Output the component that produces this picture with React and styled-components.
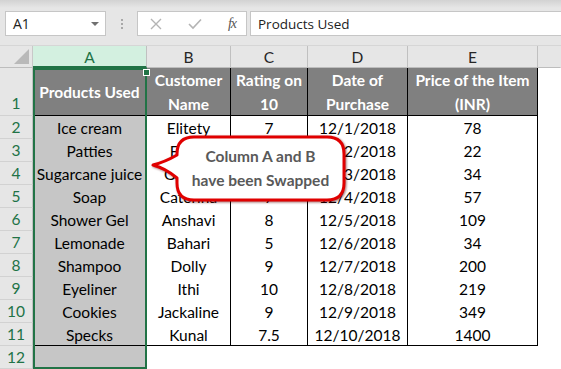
import React from 'react';
import styled, { createGlobalStyle } from 'styled-components';

const GlobalStyle = createGlobalStyle`
  html, body {
    margin: 0;
    padding: 0;
    overflow: hidden;
    background: #fff;
  }
  * {
    box-sizing: border-box;
  }
`;

const Page = styled.div`
  width: 561px;
  height: 369px;
  overflow: hidden;
  font-family: Lato, 'Liberation Sans', sans-serif;
`;

const Toolbar = styled.div`
  height: 46px;
  display: flex;
  align-items: flex-start;
  padding: 11px 0 0 5px;
  background: linear-gradient(#d2d2d2 0px, #e6e6e6 8px, #e6e6e6 100%);
  border-bottom: 1px solid #d6d6d6;
`;

const NameBox = styled.div`
  width: 101px;
  height: 25px;
  background: #fff;
  border: 1px solid #c6c6c6;
  display: flex;
  align-items: center;
  justify-content: space-between;
  padding: 0 6px 0 7px;
  font-family: 'Open Sans', sans-serif;
  font-size: 14px;
  color: #222;
`;

const DropArrow = styled.span`
  width: 0;
  height: 0;
  border-left: 4px solid transparent;
  border-right: 4px solid transparent;
  border-top: 4px solid #707070;
`;

const Grip = styled.div`
  width: 31px;
  height: 25px;
  display: flex;
  flex-direction: column;
  align-items: center;
  justify-content: center;
  gap: 2px;

  span {
    width: 2px;
    height: 2px;
    background: #a8a8a8;
  }
`;

const ButtonBox = styled.div`
  width: 110px;
  height: 25px;
  background: #fff;
  border: 1px solid #c6c6c6;
  display: flex;
  align-items: center;
  justify-content: space-between;
  padding: 0 10px 0 12px;
`;

const Fx = styled.span`
  font-family: 'Liberation Serif', serif;
  font-style: italic;
  font-size: 14px;
  color: #555;
  letter-spacing: -1px;
`;

const FormulaInput = styled.div`
  flex: 1;
  height: 25px;
  margin-left: 3px;
  background: #fff;
  border: 1px solid #c6c6c6;
  border-right: none;
  display: flex;
  align-items: center;
  padding-left: 7px;
  font-family: 'Open Sans', sans-serif;
  font-size: 13.5px;
  color: #222;
`;

const Sheet = styled.div`
  position: relative;
  display: grid;
  grid-template-columns: 33px 114px 84px 77px 100px 130px 1fr;
  grid-template-rows: 22px 48px repeat(11, 23px);
`;

const Corner = styled.div`
  background: #e6e6e6;
  border-right: 1px solid #c8c8c8;
  border-bottom: 1px solid #bdbdbd;
  position: relative;

  &::after {
    content: '';
    position: absolute;
    right: 3px;
    bottom: 3px;
    width: 0;
    height: 0;
    border-left: 15px solid transparent;
    border-bottom: 15px solid #b9b9b9;
  }
`;

const ColHead = styled.div`
  background: ${p => (p.$active ? '#d3f0e0' : '#e6e6e6')};
  color: ${p => (p.$active ? '#217346' : '#262626')};
  border-right: 1px solid ${p => (p.$last ? 'transparent' : '#c0c0c0')};
  border-bottom: ${p => (p.$active ? '2px solid #217346' : '1px solid #bdbdbd')};
  display: flex;
  align-items: center;
  justify-content: center;
  font-size: 15.5px;
  padding-top: 1px;
`;

const RowHead = styled.div`
  background: #e6e6e6;
  color: #217346;
  border-right: 1px solid #c0c0c0;
  border-bottom: 1px solid #d2d2d2;
  display: flex;
  align-items: ${p => (p.$tall ? 'flex-end' : 'center')};
  justify-content: center;
  padding-bottom: ${p => (p.$tall ? '3px' : '0')};
  font-size: 15.5px;
`;

const bgFor = v => (v === 'head' ? '#808080' : v === 'sel' ? '#c6c6c6' : '#fff');

const Cell = styled.div`
  background: ${p => bgFor(p.$variant)};
  color: ${p => (p.$variant === 'head' ? '#fff' : '#000')};
  font-weight: ${p => (p.$variant === 'head' ? 700 : 400)};
  border-right: ${p => (p.$edge ? '1px solid #000' : 'none')};
  border-bottom: ${p => (p.$bottom ? '1px solid #000' : 'none')};
  display: flex;
  align-items: center;
  justify-content: center;
  text-align: center;
  font-size: 15.5px;
  line-height: 24px;
  white-space: nowrap;
  padding-top: ${p => (p.$variant === 'head' ? '1px' : '1px')};
`;

const Selection = styled.div`
  position: absolute;
  left: 33px;
  top: 22px;
  width: 114px;
  bottom: 0;
  border: 2px solid #217346;
  pointer-events: none;
`;

const Handle = styled.div`
  position: absolute;
  right: -5px;
  top: -1px;
  width: 7px;
  height: 7px;
  background: #217346;
  border: 1px solid #fff;
`;

const Callout = styled.div`
  position: absolute;
  left: 150px;
  top: 87px;
  width: 198px;
  height: 72px;

  svg {
    position: absolute;
    inset: 0;
    filter: drop-shadow(1px 1px 1px rgba(90, 0, 0, 0.55));
  }
`;

const CalloutText = styled.div`
  position: absolute;
  left: 27px;
  top: 3px;
  width: 167px;
  height: 64px;
  display: flex;
  flex-direction: column;
  align-items: center;
  justify-content: center;
  font-weight: 700;
  font-size: 15.5px;
  line-height: 24px;
  color: #595959;
`;

const headers = ['Products Used', 'Customer\nName', 'Rating on\n10', 'Date of\nPurchase', 'Price of the Item\n(INR)'];

const rows = [
  ['Ice cream', 'Elitety', '7', '12/1/2018', '78'],
  ['Patties', 'Fiona', '8', '12/2/2018', '22'],
  ['Sugarcane juice', 'Gayatri', '6', '12/3/2018', '34'],
  ['Soap', 'Caterina', '7', '12/4/2018', '57'],
  ['Shower Gel', 'Anshavi', '8', '12/5/2018', '109'],
  ['Lemonade', 'Bahari', '5', '12/6/2018', '34'],
  ['Shampoo', 'Dolly', '9', '12/7/2018', '200'],
  ['Eyeliner', 'Ithi', '10', '12/8/2018', '219'],
  ['Cookies', 'Jackaline', '9', '12/9/2018', '349'],
  ['Specks', 'Kunal', '7.5', '12/10/2018', '1400'],
];

const letters = ['A', 'B', 'C', 'D', 'E', ''];

const CrossIcon = () => (
  <svg width="12" height="12" viewBox="0 0 12 12">
    <path d="M1 1 L11 11 M11 1 L1 11" stroke="#b4b4b4" strokeWidth="1.4" fill="none" />
  </svg>
);

const CheckIcon = () => (
  <svg width="14" height="12" viewBox="0 0 14 12">
    <path d="M1 6 L5 10 L13 1.5" stroke="#b4b4b4" strokeWidth="1.6" fill="none" />
  </svg>
);

const Multiline = ({ text }) =>
  text.split('\n').map((line, i) => <div key={i}>{line}</div>);

export default function App() {
  return (
    <Page>
      <GlobalStyle />
      <Toolbar>
        <NameBox>
          <span>A1</span>
          <DropArrow />
        </NameBox>
        <Grip>
          <span />
          <span />
          <span />
        </Grip>
        <ButtonBox>
          <CrossIcon />
          <CheckIcon />
          <Fx>fx</Fx>
        </ButtonBox>
        <FormulaInput>Products Used</FormulaInput>
      </Toolbar>

      <Sheet>
        <Corner />
        {letters.map((l, i) => (
          <ColHead key={i} $active={i === 0} $last={i === 5}>
            {l}
          </ColHead>
        ))}

        <RowHead $tall>1</RowHead>
        {headers.map((h, i) => (
          <Cell key={i} $variant="head" $edge $bottom>
            <div>
              <Multiline text={h} />
            </div>
          </Cell>
        ))}
        <Cell />

        {rows.map((r, ri) => (
          <React.Fragment key={ri}>
            <RowHead>{ri + 2}</RowHead>
            {r.map((v, ci) => (
              <Cell key={ci} $variant={ci === 0 ? 'sel' : 'plain'} $edge $bottom={ri === rows.length - 1}>
                {v}
              </Cell>
            ))}
            <Cell />
          </React.Fragment>
        ))}

        <RowHead>12</RowHead>
        <Cell $variant="sel" />
        <Cell />
        <Cell />
        <Cell />
        <Cell />
        <Cell />

        <Selection>
          <Handle />
        </Selection>

        <Callout>
          <svg width="198" height="72" viewBox="0 0 198 72">
            <path
              d="M27 22 L27 21 Q27 4 44 4 L177 4 Q194 4 194 21 L194 50 Q194 67 177 67 L44 67 Q27 67 27 50 L27 45 Q15 35 3 32 Q15 29 27 22 Z"
              fill="#fff"
              stroke="#e00000"
              strokeWidth="3"
              strokeLinejoin="round"
            />
          </svg>
          <CalloutText>
            <div>Column A and B</div>
            <div>have been Swapped</div>
          </CalloutText>
        </Callout>
      </Sheet>
    </Page>
  );
}
